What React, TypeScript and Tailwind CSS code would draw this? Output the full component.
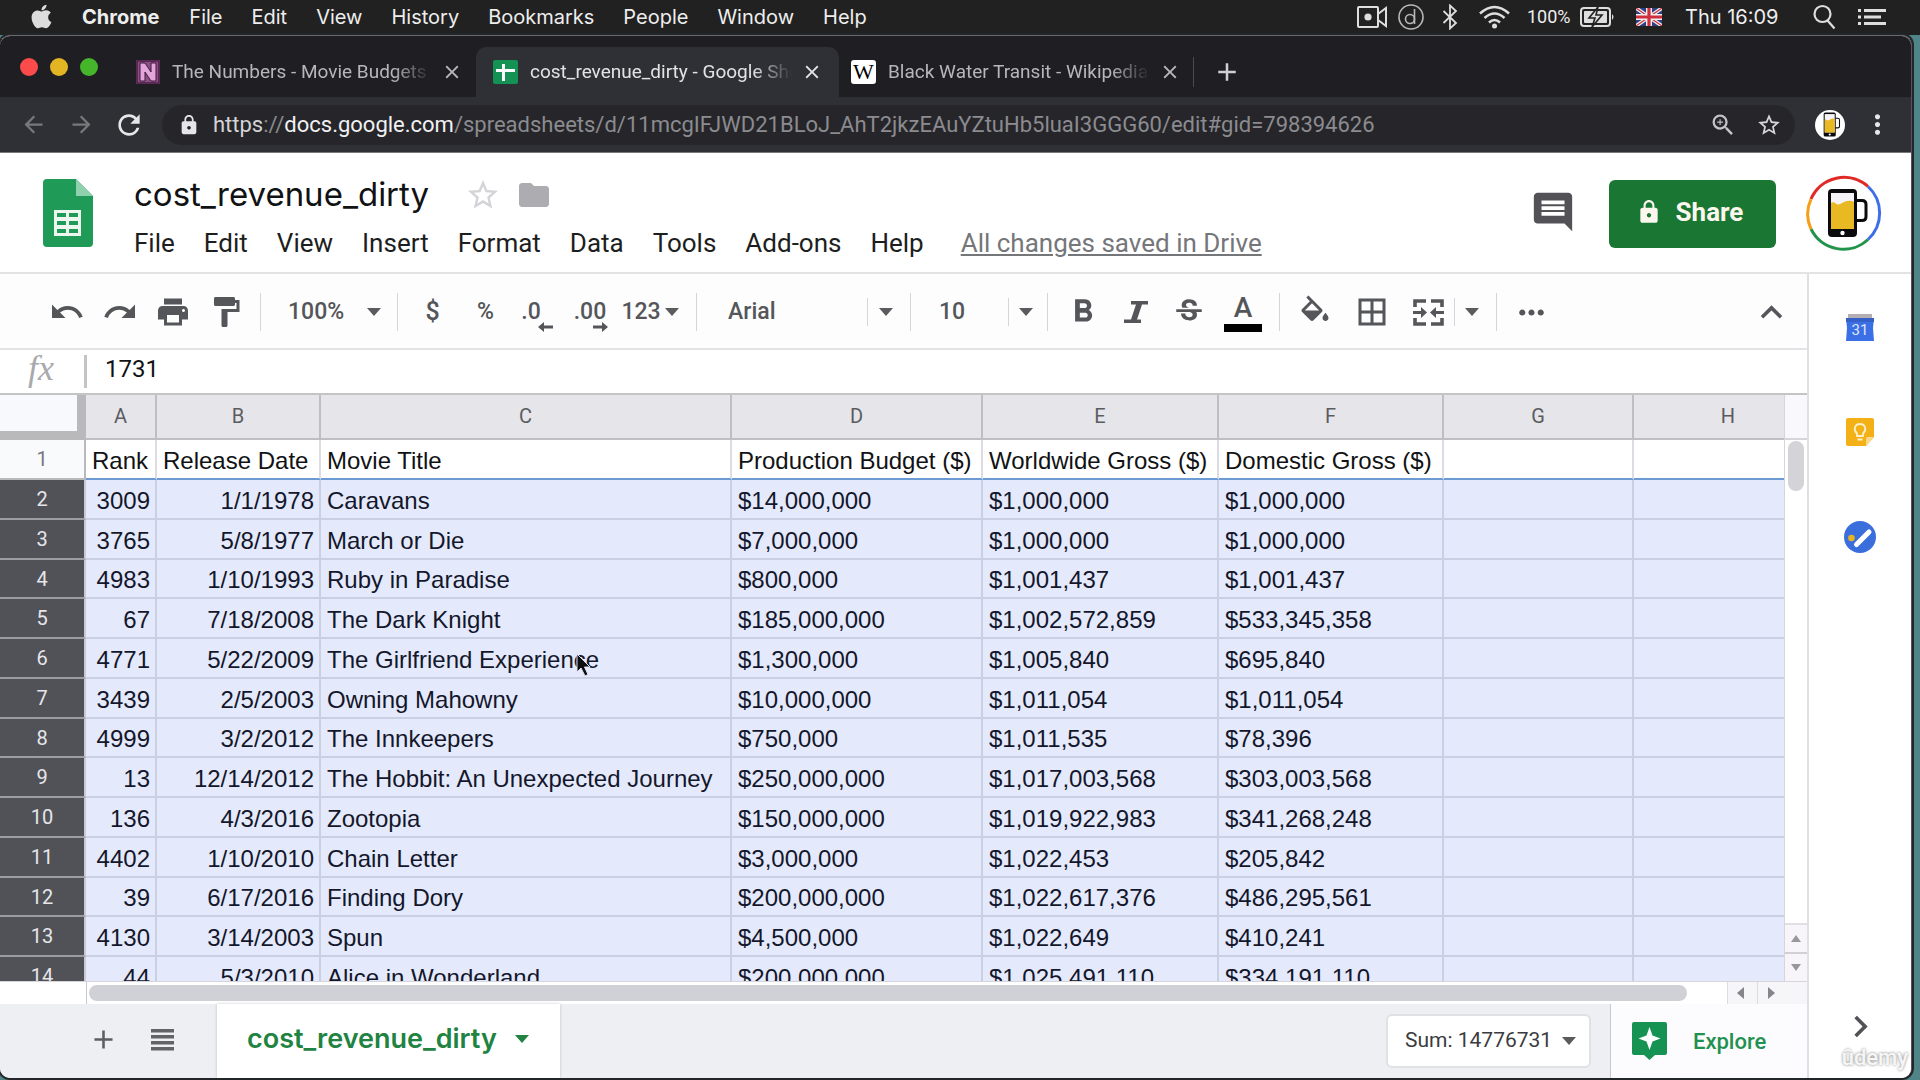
import React from "react";
import {
  MdUndo,
  MdRedo,
  MdPrint,
  MdFormatPaint,
  MdStrikethroughS,
  MdFormatBold,
  MdBorderAll,
  MdMoreHoriz,
  MdKeyboardArrowUp,
  MdKeyboardArrowRight,
  MdLock,
  MdInsertComment,
  MdFolder,
  MdStarBorder,
  MdClose,
  MdAdd,
  MdArrowBack,
  MdArrowForward,
  MdRefresh,
  MdMoreVert,
  MdZoomIn,
} from "react-icons/md";
import { FaApple } from "react-icons/fa";

type Row = [string, string, string, string, string, string];

const rows: Row[] = [
  ["3009", "1/1/1978", "Caravans", "$14,000,000", "$1,000,000", "$1,000,000"],
  ["3765", "5/8/1977", "March or Die", "$7,000,000", "$1,000,000", "$1,000,000"],
  ["4983", "1/10/1993", "Ruby in Paradise", "$800,000", "$1,001,437", "$1,001,437"],
  ["67", "7/18/2008", "The Dark Knight", "$185,000,000", "$1,002,572,859", "$533,345,358"],
  ["4771", "5/22/2009", "The Girlfriend Experience", "$1,300,000", "$1,005,840", "$695,840"],
  ["3439", "2/5/2003", "Owning Mahowny", "$10,000,000", "$1,011,054", "$1,011,054"],
  ["4999", "3/2/2012", "The Innkeepers", "$750,000", "$1,011,535", "$78,396"],
  ["13", "12/14/2012", "The Hobbit: An Unexpected Journey", "$250,000,000", "$1,017,003,568", "$303,003,568"],
  ["136", "4/3/2016", "Zootopia", "$150,000,000", "$1,019,922,983", "$341,268,248"],
  ["4402", "1/10/2010", "Chain Letter", "$3,000,000", "$1,022,453", "$205,842"],
  ["39", "6/17/2016", "Finding Dory", "$200,000,000", "$1,022,617,376", "$486,295,561"],
  ["4130", "3/14/2003", "Spun", "$4,500,000", "$1,022,649", "$410,241"],
  ["44", "5/3/2010", "Alice in Wonderland", "$200,000,000", "$1,025,491,110", "$334,191,110"],
];

const headings = [
  "Rank",
  "Release Date",
  "Movie Title",
  "Production Budget ($)",
  "Worldwide Gross ($)",
  "Domestic Gross ($)",
  "",
  "",
];

function Caret({ className = "text-[#5a5b5f]" }: { className?: string }) {
  return (
    <svg className={"h-2 w-[14px] shrink-0 " + className} viewBox="0 0 14 8" fill="currentColor" aria-hidden="true">
      <path d="M0 0h14L7 8z" />
    </svg>
  );
}

function BeerPhone({ className }: { className: string }) {
  return (
    <svg className={className} viewBox="0 0 40 60" aria-hidden="true">
      <path d="M28 15h6q4 0 4 4v15q0 4-4 4h-6" fill="none" stroke="#0b0b0d" strokeWidth="2.6" />
      <rect x="0" y="1" width="29" height="58" rx="4" fill="#0b0b0d" />
      <rect x="2.5" y="5" width="24" height="44" fill="#f6f3f8" />
      <path d="M2.5 19c4-3 6 3 10 1s9-7 14-3v32h-24z" fill="#e8b923" />
      <circle cx="14.500" cy="54" r="2.6" fill="#fff" />
    </svg>
  );
}

function MenuBar() {
  const items = ["File", "Edit", "View", "History", "Bookmarks", "People", "Window", "Help"];
  return (
    <header className="flex h-[35px] shrink-0 items-center bg-[#212121] pb-[2px] font-['Inter',sans-serif] text-[20px] text-[#eeeeee]">
      <button aria-label="Apple menu" className="ml-[29px] mr-[28px]">
        <FaApple className="h-[27px] w-[25px] text-[#dcdcdc]" />
      </button>
      <button className="font-bold">Chrome</button>
      <nav className="ml-[30px] flex gap-[29px]">
        {items.map((t) => (
          <button key={t}>{t}</button>
        ))}
      </nav>
      <div className="ml-auto flex items-center pr-[34px]">
        <svg className="h-6 w-[31px]" viewBox="0 0 31 24" fill="none" stroke="#dedede" strokeWidth="2" aria-hidden="true">
          <rect x="1" y="2" width="20" height="20" rx="1" />
          <path d="M21 9l8-6v18l-8-6" />
          <circle cx="11" cy="12" r="3.600" fill="#dedede" stroke="none" />
        </svg>
        <svg className="ml-[10px] h-[26px] w-[26px]" viewBox="0 0 26 26" fill="none" stroke="#b9b9b9" strokeWidth="1.600" aria-hidden="true">
          <circle cx="13" cy="13" r="12" />
          <circle cx="12" cy="15" r="4.500" />
          <path d="M16.500 5v15" />
        </svg>
        <svg className="ml-[18px] h-[26px] w-4" viewBox="0 0 16 26" fill="none" stroke="#dedede" strokeWidth="1.800" aria-hidden="true">
          <path d="M1.500 7l12.500 12-6 5.500V1.500L14 7 1.500 19" />
        </svg>
        <svg className="ml-[21px] h-6 w-[31px]" viewBox="0 0 31 24" fill="none" stroke="#dedede" strokeWidth="2.600" aria-hidden="true">
          <path d="M1 8.500Q15.500-4.500 30 8.500M5.500 13Q15.500 4 25.500 13M10 17.500q5.500-5 11 0" />
          <circle cx="15.500" cy="21" r="2.500" fill="#dedede" stroke="none" />
        </svg>
        <span className="ml-[17px] w-[46px] font-['Roboto',sans-serif] text-[18px]">100%</span>
        <svg className="ml-[7px] h-5 w-[35px]" viewBox="0 0 35 20" aria-hidden="true">
          <rect x="1" y="1" width="29" height="18" rx="3" fill="none" stroke="#dedede" strokeWidth="2" />
          <rect x="4" y="4" width="23" height="12" rx="1" fill="#dedede" />
          <path d="M32 7q3 3 0 6z" fill="#dedede" />
          <path d="M18 0l-9 11h6l-3 9 10-12h-6z" fill="#dedede" stroke="#212121" strokeWidth="1.600" />
        </svg>
        <svg className="ml-[21px] h-[18px] w-[26px]" viewBox="0 0 26 18" aria-hidden="true">
          <rect width="26" height="18" fill="#2f3f86" />
          <path d="M0 0l26 18M26 0L0 18" stroke="#eee" strokeWidth="3.600" />
          <path d="M0 0l26 18M26 0L0 18" stroke="#cf2f3d" strokeWidth="1.200" />
          <path d="M13 0v18M0 9h26" stroke="#eee" strokeWidth="6" />
          <path d="M13 0v18M0 9h26" stroke="#cf2f3d" strokeWidth="3.200" />
        </svg>
        <span className="ml-[23px] w-[98px] whitespace-nowrap text-[20px]">Thu 16:09</span>
        <svg className="ml-[30px] h-[26px] w-[23px]" viewBox="0 0 23 26" fill="none" stroke="#dedede" strokeWidth="2.200" aria-hidden="true">
          <circle cx="9.500" cy="10" r="8" />
          <path d="M14.500 16.500l7 8" />
        </svg>
        <svg className="ml-[22px] h-4 w-7" viewBox="0 0 28 16" fill="#dedede" aria-hidden="true">
          <path d="M0 0h3v3H0zM0 6.500h3v3H0zM0 13h3v3H0zM6 0h22v3H6zM6 6.500h17v3H6zM6 13h22v3H6z" />
        </svg>
      </div>
    </header>
  );
}

function TabStrip() {
  return (
    <div className="flex h-[61px] shrink-0 items-end bg-[#1f1e22] text-[19px] text-[#b7b7bb]">
      <div className="flex gap-3 self-stretch pl-5 pt-[22px]">
        <button aria-label="Close window" className="h-[18px] w-[18px] rounded-full bg-[#fc4b4a]" />
        <button aria-label="Minimise window" className="h-[18px] w-[18px] rounded-full bg-[#e3b423]" />
        <button aria-label="Full screen" className="h-[18px] w-[18px] rounded-full bg-[#45b62c]" />
      </div>
      <div className="ml-[38px] flex h-[50px] w-[340px] items-center">
        <svg className="h-6 w-6 shrink-0" viewBox="0 0 24 24" aria-hidden="true">
          <rect width="24" height="24" fill="#8d4f86" />
          <rect x="1" y="1" width="22" height="22" fill="none" stroke="#5a2a55" strokeWidth="2" />
          <path d="M4 21V3h5l6 9V3h5v18h-5L9 12v9z" fill="#e3a6dc" stroke="#3d1a3a" />
        </svg>
        <span className="ml-3 w-[260px] overflow-hidden whitespace-nowrap mask-r-from-85%">The Numbers - Movie Budgets</span>
        <button aria-label="Close tab" className="ml-[9px]">
          <MdClose className="h-[22px] w-[22px]" />
        </button>
      </div>
      <div className="flex h-[50px] w-[363px] items-center rounded-t-[10px] bg-[#2f3035] text-[#e3e3e6]">
        <svg className="ml-[17px] h-6 w-[25px] shrink-0" viewBox="0 0 25 24" aria-hidden="true">
          <rect width="25" height="24" rx="2" fill="#149253" />
          <path d="M9 4h3v5h10v3H12v9H9v-9H3V9h6z" fill="#fff" />
        </svg>
        <span className="ml-3 w-[262px] overflow-hidden whitespace-nowrap mask-r-from-85%">cost_revenue_dirty - Google Sheets</span>
        <button aria-label="Close tab" className="ml-[9px]">
          <MdClose className="h-[22px] w-[22px]" />
        </button>
      </div>
      <div className="flex h-[50px] w-[355px] items-center">
        <span className="ml-[12px] flex h-6 w-[25px] shrink-0 items-center justify-center rounded-[3px] bg-white font-['Liberation_Serif',serif] text-[22px] leading-6 text-black">
          W
        </span>
        <span className="ml-3 w-[262px] overflow-hidden whitespace-nowrap mask-r-from-85%">Black Water Transit - Wikipedia</span>
        <button aria-label="Close tab" className="ml-[9px]">
          <MdClose className="h-[22px] w-[22px]" />
        </button>
        <span className="ml-auto h-[30px] w-px bg-[#4a4a4f]" />
      </div>
      <button aria-label="New tab" className="ml-[18px] flex h-[50px] items-center">
        <MdAdd className="h-[30px] w-[30px] text-[#d0d0d3]" />
      </button>
    </div>
  );
}

function AddressBar() {
  return (
    <div className="flex h-14 shrink-0 items-center border-b border-[#77777c] bg-[#2f3035] text-[#e6e6e8]">
      <button aria-label="Back" className="ml-5">
        <MdArrowBack className="h-[27px] w-[27px] text-[#77787c]" />
      </button>
      <button aria-label="Forward" className="ml-[21px]">
        <MdArrowForward className="h-[27px] w-[27px] text-[#77787c]" />
      </button>
      <button aria-label="Reload" className="ml-[18px]">
        <MdRefresh className="h-8 w-8" />
      </button>
      <div className="ml-[17px] mr-[20px] flex h-10 min-w-0 flex-1 items-center rounded-full bg-[#26262a] pl-4 pr-[13px]">
        <MdLock className="h-[22px] w-[22px] shrink-0" />
        <div role="textbox" aria-label="Address" className="ml-[13px] flex-1 whitespace-nowrap text-[22px] text-[#8b8b90]">
          <span className="text-[#d3d3d6]">https</span>://<span className="text-[#f1f1f3]">docs.google.com</span>
          /spreadsheets/d/11mcgIFJWD21BLoJ_AhT2jkzEAuYZtuHb5luaI3GGG60/edit#gid=798394626
        </div>
        <button aria-label="Zoom" className="mr-[19px]">
          <MdZoomIn className="h-7 w-7 text-[#c4c4c7]" />
        </button>
        <button aria-label="Bookmark this page">
          <MdStarBorder className="h-[26px] w-[26px] text-[#d6d6d8]" />
        </button>
      </div>
      <button aria-label="Profile" className="flex h-[30px] w-[30px] items-center justify-center rounded-full bg-white">
        <BeerPhone className="ml-[3px] h-[25px] w-[20px]" />
      </button>
      <button aria-label="Chrome menu" className="ml-[17px] mr-[18px]">
        <MdMoreVert className="h-[31px] w-[31px]" />
      </button>
    </div>
  );
}

function DocHeader() {
  const menus = ["File", "Edit", "View", "Insert", "Format", "Data", "Tools", "Add-ons", "Help"];
  return (
    <div className="flex h-[121px] shrink-0 border-b-2 border-[#e3e3e6] bg-white">
      <svg className="ml-[43px] mt-[26px] h-[68px] w-[50px] shrink-0" viewBox="0 0 50 68" aria-hidden="true">
        <path d="M4 0h29l17 17v47q0 4-4 4H4q-4 0-4-4V4q0-4 4-4z" fill="#1f9a57" />
        <path d="M33 0l17 17H33z" fill="#8fd0ad" />
        <path d="M11 31h27v26H11z" fill="#eef6f0" />
        <path d="M14 34h9v4h-9zM26 34h9v4h-9zM14 42h9v4h-9zM26 42h9v4h-9zM14 50h9v4h-9zM26 50h9v4h-9z" fill="#1f9a57" />
      </svg>
      <div className="ml-[41px] mt-[18px]">
        <div className="flex items-center">
          <input
            aria-label="Document name"
            defaultValue="cost_revenue_dirty"
            className="h-12 w-[331px] bg-transparent font-['Inter',sans-serif] text-[33px] text-[#111214] outline-none"
          />
          <button aria-label="Star">
            <MdStarBorder className="h-9 w-9 text-[#d4d4d8]" />
          </button>
          <button aria-label="Move to folder" className="ml-[15px]">
            <MdFolder className="h-9 w-9 text-[#adadb1]" />
          </button>
        </div>
        <nav className="flex h-12 items-center whitespace-nowrap text-[26px] text-[#1d1e20]">
          {menus.map((m) => (
            <button key={m} className="mr-[29px]">
              {m}
            </button>
          ))}
          <a href="#history" className="ml-2 text-[#75767a] underline decoration-2 underline-offset-2">
            All changes saved in Drive
          </a>
        </nav>
      </div>
      <button aria-label="Open comment history" className="ml-auto mt-[36px] h-[46px]">
        <MdInsertComment className="h-[46px] w-[46px] text-[#525257]" />
      </button>
      <button className="ml-[33px] mt-[27px] flex h-[68px] w-[167px] items-center justify-center gap-[14px] rounded-[6px] bg-[#1a7633] pb-1 pr-[6px] text-[26px] font-bold text-[#fbf6ee]">
        <MdLock className="h-[26px] w-[26px]" />
        Share
      </button>
      <button aria-label="Account" className="ml-[30px] mr-[29px] mt-[22px] h-[76px] w-[76px]">
        <svg className="h-full w-full" viewBox="0 0 76 76" fill="none" strokeWidth="3" aria-hidden="true">
          <path d="M5 24A36 36 0 0 1 62 11.500" stroke="#e02a25" />
          <path d="M62 11.500A36 36 0 0 1 62 64.500" stroke="#3f6fe8" />
          <path d="M62 64.500A36 36 0 0 1 5 54" stroke="#22934a" />
          <path d="M5 54A36 36 0 0 1 5 24" stroke="#f59f14" />
          <path d="M50 25.500h6q4 0 4 4v12q0 4-4 4h-6" stroke="#0b0b0d" />
          <rect x="22" y="14" width="29" height="48" rx="4" fill="#0b0b0d" />
          <rect x="25" y="18" width="23" height="36" fill="#f6f3f8" />
          <path d="M25 28c4-3 5 3 9 1s9-5 14-2v27H25z" fill="#e8b923" />
          <circle cx="36.500" cy="58" r="2.200" fill="#fff" />
        </svg>
      </button>
    </div>
  );
}

function Tool({ label, className = "w-[53px]", children }: { label: string; className?: string; children: React.ReactNode }) {
  return (
    <button aria-label={label} className={"flex shrink-0 items-center justify-center " + className}>
      {children}
    </button>
  );
}

function Sep() {
  return <span className="mx-2 h-[38px] w-px shrink-0 bg-[#d6d6d9]" />;
}

function InnerSep() {
  return <span className="h-7 w-px shrink-0 bg-[#d6d6d9]" />;
}

function Toolbar() {
  return (
    <div className="flex h-[76px] shrink-0 items-center border-b-2 border-[#e3e3e6] bg-[#fdfdfe] pl-10 pt-[2px] text-[23px] font-medium text-[#55565a]">
      <Tool label="Undo">
        <MdUndo className="h-9 w-9" />
      </Tool>
      <Tool label="Redo">
        <MdRedo className="h-9 w-9" />
      </Tool>
      <Tool label="Print">
        <MdPrint className="h-9 w-9" />
      </Tool>
      <Tool label="Paint format">
        <MdFormatPaint className="h-9 w-9" />
      </Tool>
      <Sep />
      <label className="flex w-[120px] shrink-0 items-center pl-[19px]">
        <select aria-label="Zoom" className="w-[79px] appearance-none bg-transparent outline-none">
          <option>100%</option>
        </select>
        <Caret />
      </label>
      <Sep />
      <Tool label="Format as currency">
        <span className="text-[25px]">$</span>
      </Tool>
      <Tool label="Format as percent">%</Tool>
      <Tool label="Decrease decimal places" className="w-[52px]">
        <span className="pr-[14px]">.0</span>
        <svg className="absolute mt-[30px] ml-[16px] h-[10px] w-4" viewBox="0 0 16 10" fill="currentColor" aria-hidden="true">
          <path d="M0 5l6-5v3.500h9v3H6V10z" />
        </svg>
      </Tool>
      <Tool label="Increase decimal places" className="w-[52px]">
        <span>.00</span>
        <svg className="absolute mt-[30px] ml-[20px] h-[10px] w-4" viewBox="0 0 16 10" fill="currentColor" aria-hidden="true">
          <path d="M16 5l-6-5v3.500H1v3h9V10z" />
        </svg>
      </Tool>
      <Tool label="More formats" className="w-[72px] gap-1 pr-1">
        123
        <Caret />
      </Tool>
      <Sep />
      <label className="flex w-[197px] shrink-0 items-center pl-[23px]">
        <select aria-label="Font" className="w-[139px] appearance-none bg-transparent outline-none">
          <option>Arial</option>
        </select>
        <InnerSep />
        <span className="ml-[11px]">
          <Caret />
        </span>
      </label>
      <Sep />
      <label className="flex w-[120px] shrink-0 items-center pl-5">
        <select aria-label="Font size" className="w-[69px] appearance-none bg-transparent outline-none">
          <option>10</option>
        </select>
        <InnerSep />
        <span className="ml-[10px]">
          <Caret />
        </span>
      </label>
      <Sep />
      <Tool label="Bold">
        <MdFormatBold className="h-[38px] w-[38px]" />
      </Tool>
      <Tool label="Italic">
        <svg className="h-[22px] w-6" viewBox="0 0 24 22" fill="currentColor" aria-hidden="true">
          <path d="M7 0h17v3.500h-6l-5 15h4V22H0v-3.500h7l5-15H7z" />
        </svg>
      </Tool>
      <Tool label="Strikethrough">
        <MdStrikethroughS className="h-[34px] w-[34px]" />
      </Tool>
      <Tool label="Text color" className="w-[56px]">
        <span className="border-b-[8px] border-black px-[10px] text-[28px] leading-[32px]">A</span>
      </Tool>
      <Sep />
      <Tool label="Fill color">
        <svg className="h-9 w-9" viewBox="0 -1 24 24" fill="currentColor" aria-hidden="true">
          <path d="M16.560 8.940L7.620 0 6.210 1.410l2.380 2.380-5.150 5.150c-.59.59-.59 1.540 0 2.120l5.500 5.500c.29.29.68.44 1.060.44s.77-.15 1.060-.44l5.500-5.500c.59-.58.59-1.530 0-2.120zM5.210 10L10 5.210 14.790 10H5.210zM19 11.500s-2 2.170-2 3.500c0 1.100.9 2 2 2s2-.9 2-2c0-1.330-2-3.500-2-3.500z" />
        </svg>
      </Tool>
      <Tool label="Borders" className="w-[61px]">
        <MdBorderAll className="h-9 w-9" />
      </Tool>
      <Tool label="Merge cells" className="w-[52px]">
        <svg className="h-[27px] w-[31px]" viewBox="0 0 31 27" fill="none" stroke="currentColor" strokeWidth="3.600" aria-hidden="true">
          <path d="M2 8V2h11M18 2h11v6M2 19v6h11M18 25h11v-6" />
          <path d="M0 13.500h9M31 13.500h-9" strokeWidth="3" />
          <path d="M8 8l6 5.500L8 19zM23 8l-6 5.500 6 5.500z" fill="currentColor" stroke="none" />
        </svg>
      </Tool>
      <InnerSep />
      <Tool label="Merge type" className="w-[33px]">
        <Caret />
      </Tool>
      <Sep />
      <Tool label="More">
        <MdMoreHoriz className="h-[37px] w-[37px]" />
      </Tool>
      <button aria-label="Hide the menus" className="ml-auto mr-[14px]">
        <MdKeyboardArrowUp className="h-[43px] w-[43px]" />
      </button>
    </div>
  );
}

function FormulaBar() {
  return (
    <label className="flex h-[45px] shrink-0 items-center border-b-2 border-[#c4c4c7] bg-white">
      <span className="w-[84px] pb-2 pl-[28px] font-['Liberation_Serif',serif] text-[36px] italic leading-9 text-[#a9a9ad]">fx</span>
      <span className="h-[33px] w-[3px] bg-[#c4c4c7]" />
      <input
        aria-label="Formula"
        defaultValue="1731"
        className="ml-[18px] flex-1 bg-transparent pb-[6px] text-[24px] text-[#111214] outline-none"
      />
    </label>
  );
}

function SheetGrid() {
  return (
    <div className="flex min-h-0 flex-1">
      <div className="min-w-0 flex-1 overflow-hidden">
        <table className="w-[calc(100%+40px)] table-fixed border-separate border-spacing-0 font-['Liberation_Sans',Arial,sans-serif] text-[24px] text-[#14172b]">
          <colgroup>
            <col className="w-[86px]" />
            <col className="w-[71px]" />
            <col className="w-[164px]" />
            <col className="w-[411px]" />
            <col className="w-[251px]" />
            <col className="w-[236px]" />
            <col className="w-[225px]" />
            <col className="w-[190px]" />
            <col />
          </colgroup>
          <thead>
            <tr className="h-[45px] font-['Roboto',sans-serif] text-[20px] text-[#5b5c60]">
              <td className="border-b-[9px] border-r-[9px] border-[#b9b9bc] bg-[#f8f9fc] p-0" />
              {["A", "B", "C", "D", "E", "F", "G", "H"].map((c) => (
                <th key={c} scope="col" className="border-b-2 border-r-2 border-[#bebec3] bg-[#e6e5ea] p-0 pb-[2px] font-normal">
                  {c}
                </th>
              ))}
            </tr>
          </thead>
          <tbody>
            <tr className="h-10 text-[#111214]">
              <th scope="row" className="border-b-2 border-r-2 border-[#b9b9bc] bg-[#f9fafc] p-0 font-['Roboto',sans-serif] text-[20px] font-normal text-[#77787c]">
                1
              </th>
              {headings.map((h, i) => (
                <td key={i} className="overflow-hidden whitespace-nowrap border-b-2 border-r-2 border-b-[#6b9bd2] border-r-[#dcdce2] bg-white p-0 pl-[6px] pt-1 leading-none">
                  {h}
                </td>
              ))}
            </tr>
            {rows.map((r, i) => (
              <tr key={r[0]} className={i % 4 === 2 ? "h-[39px]" : "h-10"}>
                <th scope="row" className="border-b-2 border-r-2 border-b-[#9c9da3] border-r-[#c9cad0] bg-[#505258] p-0 font-['Roboto',sans-serif] text-[20px] font-normal leading-none text-[#e6e6ea]">
                  {i + 2}
                </th>
                {[...r, "", ""].map((v, c) => (
                  <td
                    key={c}
                    className={
                      "overflow-hidden whitespace-nowrap border-b-2 border-r-2 border-[#c9d0e4] bg-[#e4eafc] p-0 pt-[3px] leading-none " +
                      (c < 2 ? "pr-[5px] text-right" : "pl-[6px]")
                    }
                  >
                    {v}
                  </td>
                ))}
              </tr>
            ))}
          </tbody>
        </table>
      </div>
      <div className="flex w-[23px] shrink-0 flex-col border-l border-[#d5d5da] bg-white">
        <div className="h-[45px] shrink-0 border-b-2 border-[#d5d5da] bg-[#f9f9fd]" />
        <div className="flex-1 pl-[3px] pt-[1px]">
          <div className="h-[50px] w-4 rounded-full bg-[#d3d3d8]" />
        </div>
        <button aria-label="Scroll up" className="flex h-[29px] items-center justify-center border-t-2 border-[#dfdfe4] bg-[#f7f5f9]">
          <svg className="h-[7px] w-[10px]" viewBox="0 0 10 7" fill="#97979c" aria-hidden="true">
            <path d="M5 0l5 7H0z" />
          </svg>
        </button>
        <button aria-label="Scroll down" className="flex h-[29px] items-center justify-center border-t-2 border-[#cfcfd4] bg-[#f7f5f9]">
          <svg className="h-[7px] w-[10px]" viewBox="0 0 10 7" fill="#97979c" aria-hidden="true">
            <path d="M5 7L0 0h10z" />
          </svg>
        </button>
      </div>
    </div>
  );
}

function HorizontalScroll() {
  return (
    <div className="flex h-[23px] shrink-0 border-t border-[#d5d5da] bg-white">
      <div className="w-[87px] shrink-0 border-r border-[#c9cad0]" />
      <div className="flex flex-1 items-center pl-[2px] pr-10">
        <div className="h-4 w-full rounded-full bg-[#cfd1d6]" />
      </div>
      <button aria-label="Scroll left" className="flex w-[30px] items-center justify-center border-l border-[#dcdce0] bg-[#f6f6f9] pr-1">
        <svg className="h-3 w-[7px]" viewBox="0 0 7 12" fill="#85868a" aria-hidden="true">
          <path d="M7 0v12L0 6z" />
        </svg>
      </button>
      <button aria-label="Scroll right" className="flex w-[50px] items-center border-l border-[#dcdce0] bg-[#f6f6f9] pl-[10px]">
        <svg className="h-3 w-[7px]" viewBox="0 0 7 12" fill="#85868a" aria-hidden="true">
          <path d="M0 0v12l7-6z" />
        </svg>
      </button>
    </div>
  );
}

function SheetTabs() {
  return (
    <div className="flex h-[74px] shrink-0 items-stretch bg-[#eeeff2]">
      <button aria-label="Add sheet" className="ml-[88px] pb-1">
        <MdAdd className="h-[31px] w-[31px] text-[#5d5e62]" />
      </button>
      <button aria-label="All sheets" className="ml-[32px] pb-[2px]">
        <svg className="h-[22px] w-[23px]" viewBox="0 0 23 22" fill="#626367" aria-hidden="true">
          <path d="M0 0h23v3.500H0zM0 6h23v3.500H0zM0 12h23v3.500H0zM0 18h23v3.500H0z" />
        </svg>
      </button>
      <button className="ml-[43px] flex w-[343px] items-center gap-[18px] bg-white pb-1 pl-[30px] font-['Inter',sans-serif] text-[27px] font-semibold text-[#218342] shadow-[0_0_3px_rgba(0,0,0,0.2)]">
        cost_revenue_dirty
        <Caret className="text-[#218342]" />
      </button>
      <label className="ml-auto flex h-[54px] w-[205px] items-center self-center rounded-[6px] border-2 border-[#e0e1e4] bg-white pl-[17px]">
        <select aria-label="Summary of selection" className="w-[157px] appearance-none bg-transparent text-[21px] text-[#3b3c40] outline-none">
          <option>Sum: 14776731</option>
        </select>
        <Caret />
      </label>
      <button className="ml-[19px] flex w-[197px] items-center border-l border-[#c9cace] bg-[#fcfbfd] pl-[21px] text-[22px] font-medium text-[#1f9150]">
        <svg className="h-[38px] w-[35px]" viewBox="0 0 35 38" aria-hidden="true">
          <path d="M2 0h31q2 0 2 2v29q0 2-2 2H23l-5.500 5-5.500-5H2q-2 0-2-2V2q0-2 2-2z" fill="#169353" />
          <path d="M17.500 5l3 8.500L28.500 16.500l-8 3-3 8.500-3-8.500-8-3 8-3z" fill="#fff" />
        </svg>
        <span className="ml-[26px]">Explore</span>
      </button>
    </div>
  );
}

function SidePanel() {
  return (
    <aside className="flex w-[104px] shrink-0 flex-col items-center border-l-2 border-[#dfdfe4] bg-white pt-[39px]">
      <button aria-label="Calendar" className="mb-[76px]">
        <svg className="h-[29px] w-7" viewBox="0 0 28 29" aria-hidden="true">
          <path d="M2 1h24v5H2z" fill="#b5aeb2" />
          <path d="M0 5h28l-1 10 1 13H0l1-13z" fill="#3b6fe6" />
          <path d="M0 5h28v4H0z" fill="#3460c8" />
          <text x="14" y="22" textAnchor="middle" fontSize="15" fontFamily="Roboto, sans-serif" fill="#dfe8fb">
            31
          </text>
        </svg>
      </button>
      <button aria-label="Keep" className="mb-[75px]">
        <svg className="h-7 w-7" viewBox="0 0 28 28" fill="none" aria-hidden="true">
          <path d="M2 0h24q2 0 2 2v17l-8 9H2q-2 0-2-2V2q0-2 2-2z" fill="#f4b017" />
          <path d="M28 19l-8 9v-7q0-2 2-2z" fill="#fbd98a" />
          <path d="M11 18v-2.500C7 12 8.500 6 14 6s7 6 3 9.500V18zM11.500 21.500h5" stroke="#fdf0c8" strokeWidth="1.800" />
        </svg>
      </button>
      <button aria-label="Tasks">
        <svg className="h-8 w-8" viewBox="0 0 32 32" aria-hidden="true">
          <circle cx="16" cy="16" r="16" fill="#3b6edd" />
          <path d="M12.500 23.500L25 11" stroke="#fff" strokeWidth="5" strokeLinecap="round" />
          <circle cx="7.500" cy="17" r="3.300" fill="#e6b321" />
        </svg>
      </button>
      <button aria-label="Hide side panel" className="mb-[30px] mt-auto">
        <MdKeyboardArrowRight className="h-[43px] w-[43px] text-[#515256]" />
      </button>
    </aside>
  );
}

export default function App() {
  return (
    <div className="relative flex h-screen flex-col overflow-hidden bg-[#4f8589] font-['Roboto',sans-serif]">
      <MenuBar />
      <main className="mb-[2px] mr-2 flex min-h-0 flex-1 flex-col overflow-hidden rounded-[10px] border-r border-t border-r-[#55555a] border-t-[#6a6a6d] bg-white shadow-[0_0_0_2px_#222629]">
        <TabStrip />
        <AddressBar />
        <DocHeader />
        <div className="flex min-h-0 flex-1">
          <div className="flex min-w-0 flex-1 flex-col">
            <Toolbar />
            <FormulaBar />
            <SheetGrid />
            <HorizontalScroll />
            <SheetTabs />
          </div>
          <SidePanel />
        </div>
      </main>
      <svg className="absolute left-[576px] top-[653px] h-[25px] w-4" viewBox="0 0 16 25" aria-hidden="true">
        <path d="M1 1v18l4-4 4 8 3-1.500-3.500-7.500H14z" fill="#0d0e12" stroke="#dfe3f2" />
      </svg>
      <span className="absolute bottom-[6px] right-3 text-[22px] font-medium text-white/90 [text-shadow:0_0_3px_rgba(0,0,0,0.55)]">ûdemy</span>
    </div>
  );
}
